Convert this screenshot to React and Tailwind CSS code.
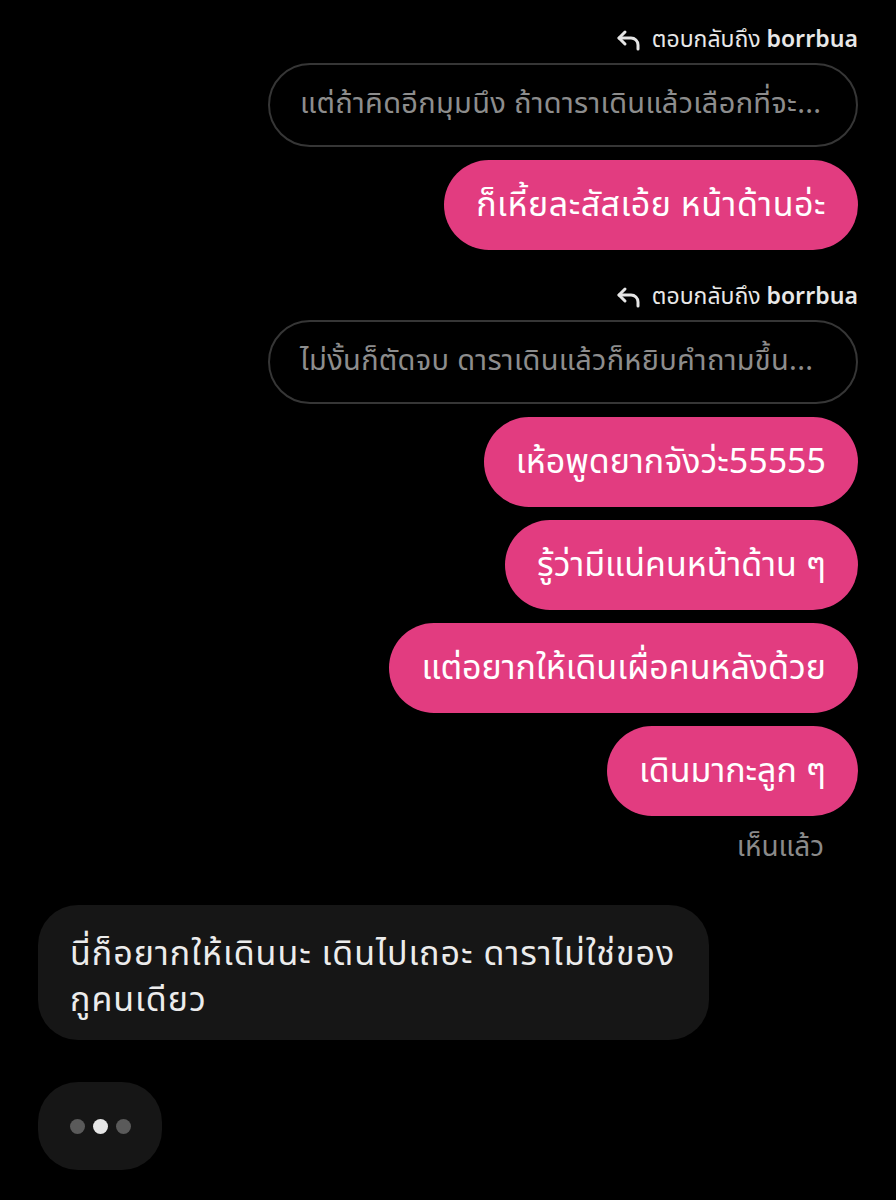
import React from "react";

const font = { fontFamily: '"Noto Sans Thai", "Noto Sans", Roboto, "DejaVu Sans", sans-serif' };

function ReplyIcon() {
  return (
    <svg width="26" height="22" viewBox="0 0 26 22" fill="none" stroke="#e5e5e5" strokeWidth="3" strokeLinecap="round" strokeLinejoin="round">
      <path d="M9 3 L3 9 L9 15" />
      <path d="M3 9 H15 a7 7 0 0 1 7 7 V20" />
    </svg>
  );
}

function ReplyHeader() {
  return (
    <div className="flex items-center justify-end gap-[10px] pr-[38px] h-[28px] text-[23px] text-[#e8e8e8]">
      <ReplyIcon />
      <span>
        ตอบกลับถึง <span className="font-semibold">borrbua</span>
      </span>
    </div>
  );
}

function Quote({ children }) {
  return (
    <div className="flex justify-end pr-[38px]">
      <div className="w-[590px] h-[84px] rounded-full border-2 border-[#363636] flex items-center px-[30px] text-[29px] tracking-[0.3px] text-[#8d8d8d] whitespace-nowrap overflow-hidden">
        {children}
      </div>
    </div>
  );
}

function Pink({ children, wide }) {
  return (
    <div className="flex justify-end pr-[38px]">
      <div className={"h-[90px] rounded-full bg-[#e23c80] flex items-center px-[32px] text-[34px] text-white whitespace-nowrap " + (wide ? "tracking-[0.5px]" : "")}>
        {children}
      </div>
    </div>
  );
}

export default function App() {
  return (
    <div className="w-[896px] h-[1200px] bg-black overflow-hidden" style={font}>
      <div className="pt-[26px] flex flex-col">
        <ReplyHeader />
        <div className="h-[9px]" />
        <Quote>แต่ถ้าคิดอีกมุมนึง ถ้าดาราเดินแล้วเลือกที่จะ...</Quote>
        <div className="h-[13px]" />
        <Pink wide>ก็เหี้ยละสัสเอ้ย หน้าด้านอ่ะ</Pink>
        <div className="h-[33px]" />
        <ReplyHeader />
        <div className="h-[9px]" />
        <Quote>ไม่งั้นก็ตัดจบ ดาราเดินแล้วก็หยิบคำถามขึ้น...</Quote>
        <div className="h-[13px]" />
        <div className="flex flex-col gap-[13px]">
          <Pink>เห้อพูดยากจังว่ะ55555</Pink>
          <Pink>รู้ว่ามีแน่คนหน้าด้าน ๆ</Pink>
          <Pink>แต่อยากให้เดินเผื่อคนหลังด้วย</Pink>
          <Pink>เดินมากะลูก ๆ</Pink>
        </div>
        <div className="flex justify-end pr-[72px] mt-[14px] text-[28px] text-[#8a8a8a] h-[36px] items-center">
          เห็นแล้ว
        </div>
        <div className="pl-[38px] mt-[39px]">
          <div className="w-[671px] h-[135px] rounded-[40px] bg-[#161616] px-[32px] pt-[27px] text-[34px] tracking-[1px] text-[#ececec]">
            <div className="leading-[46px] whitespace-nowrap">นี่ก็อยากให้เดินนะ เดินไปเถอะ ดาราไม่ใช่ของ</div>
            <div className="leading-[46px] whitespace-nowrap">กูคนเดียว</div>
          </div>
        </div>
        <div className="pl-[38px] mt-[42px]">
          <div className="w-[124px] h-[88px] rounded-[40px] bg-[#161616] flex items-center justify-center gap-[8px]">
            <span className="w-[15px] h-[15px] rounded-full bg-[#5a5a5a]" />
            <span className="w-[15px] h-[15px] rounded-full bg-[#e6e6e6]" />
            <span className="w-[15px] h-[15px] rounded-full bg-[#5a5a5a]" />
          </div>
        </div>
      </div>
    </div>
  );
}
